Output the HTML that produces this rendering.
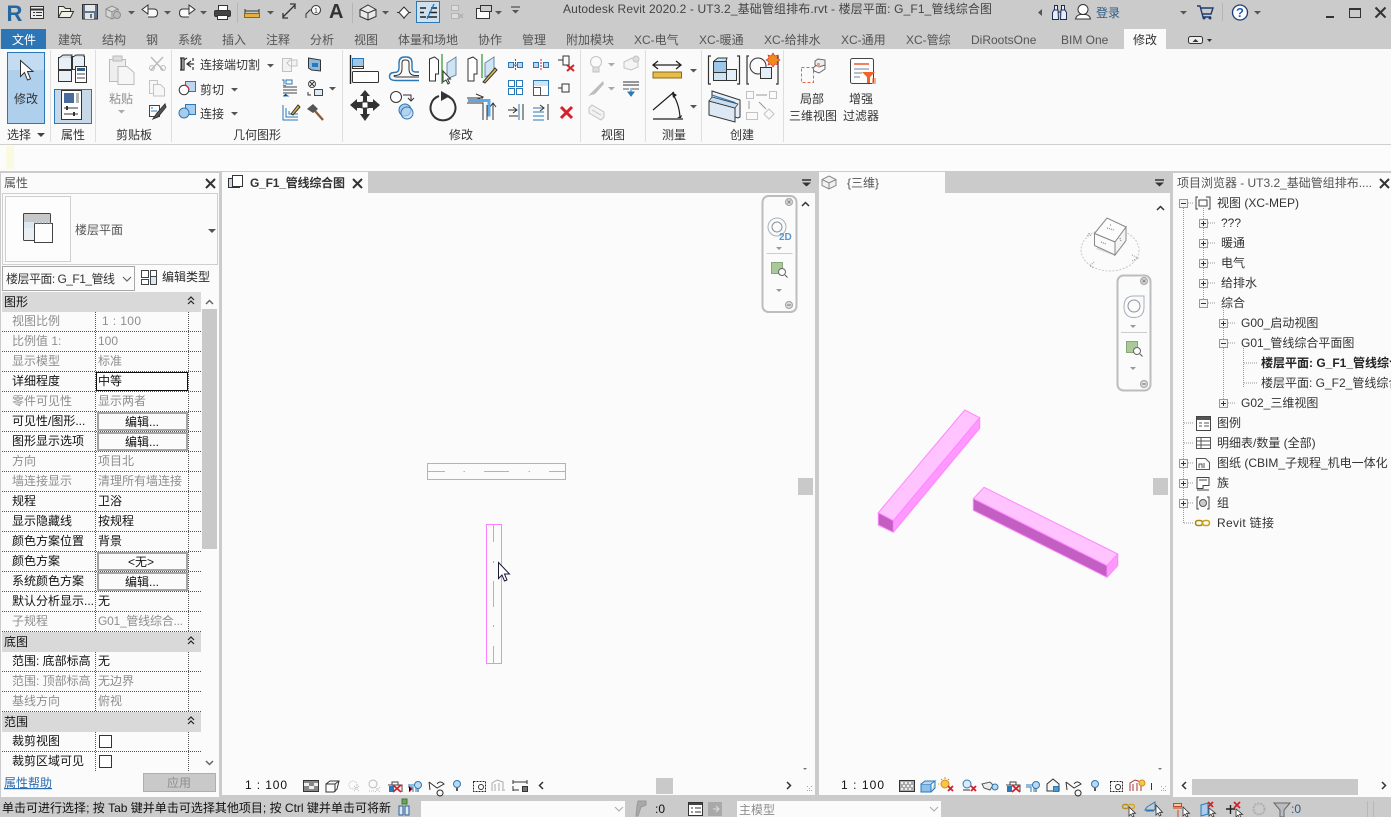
<!DOCTYPE html>
<html lang="zh"><head><meta charset="utf-8"><title>Autodesk Revit 2020.2</title>
<style>
html,body{margin:0;padding:0;background:#cbcbcb;width:1391px;height:817px;overflow:hidden}
svg{display:block;position:absolute;left:0;top:0}
text{font-family:"Liberation Sans","Noto Sans CJK SC",sans-serif;font-size:12px;fill:#333;white-space:pre}
.g{fill:#8e8e8e}.k{fill:#111}.m{fill:#555}
.d{stroke:#333;fill:none}.l{stroke:#bdbdbd;fill:none}.b{stroke:#2a78b8;fill:none}
.dot{stroke:#555;stroke-width:1;stroke-dasharray:1 1;fill:none}
.tr{stroke:#999;stroke-width:1;stroke-dasharray:1 1;fill:none}
.btn{fill:#fbfbfb;stroke:#a5a5a5;stroke-width:2}
</style></head><body>
<svg width="1391" height="817" viewBox="0 0 1391 817" xmlns="http://www.w3.org/2000/svg">
<defs>
<path id="ar" d="M0 0h7l-3.500 3.500z" fill="#555"/>
<g id="pl"><rect x=".5" y=".5" width="8" height="8" fill="#f4f4f4" stroke="#999"/><path d="M2 4.500h5M4.500 2v5" stroke="#333"/></g>
<g id="mi"><rect x=".5" y=".5" width="8" height="8" fill="#f4f4f4" stroke="#999"/><path d="M2 4.500h5" stroke="#333"/></g>
<g id="gr"><path d="M0 0h1v1H0zM2 2h1v1H2zM4 4h1v1H4zM4 0h1v1H4zM0 4h1v1H0zM2 4h1v1H2z" fill="#aaa"/></g>
</defs>

<!-- base -->
<rect width="1391" height="817" fill="#cbcbcb"/>
<!-- ribbon -->
<rect x="0" y="49" width="1391" height="95" fill="#fafafa"/>
<rect x="0" y="145" width="1391" height="26" fill="#fcfcfc"/>
<rect x="6" y="146" width="8" height="23" fill="#fafae0"/>
<rect x="0" y="144" width="1391" height="1" fill="#cfcfcf"/>
<path d="M50.500 50v92M95.500 50v92M171.500 50v92M342.500 50v92M580.500 50v92M645.500 50v92M701.500 50v92M783.500 50v92" stroke="#dedede"/>

<!-- title bar -->
<text x="6.500" y="21" style="font-size:22px;font-weight:bold;fill:#27679f">R</text>
<g class="d"><rect x="30.500" y="6.500" width="13" height="12" fill="#eee"/><path d="M31 9.500h12" stroke-width="2"/><path d="M33 12.500h2M36 12.500h6M33 15.500h2M36 15.500h6"/></g>
<path d="M58.500 17.500v-11h5l2 2h5v3M58.500 17.500l3-6h12l-3 6z" fill="#f2f0e4" stroke="#333"/>
<g><rect x="82.500" y="4.500" width="15" height="14.500" fill="#607389" stroke="#333"/><rect x="85" y="5" width="10" height="6" fill="#e6e9ec"/><rect x="85" y="13" width="9" height="6" fill="#e4e4e4"/><rect x="90" y="14" width="2" height="4" fill="#607389"/></g>
<path d="M106 9l6-3 6 3v7l-6 3-6-3z" fill="#d6d6d6" stroke="#8c8c8c"/><path d="M106 9l6 3 6-3M112 12v7" stroke="#8c8c8c" fill="none"/><circle cx="117" cy="15" r="3.500" fill="#bbb" stroke="#8c8c8c"/><use href="#ar" x="128" y="11"/>
<path d="M148 9h6q3.500 0 3.500 4t-3.500 4h-6M148 5l-6 4.500 6 4.500z" fill="#fafafa" stroke="#333"/><use href="#ar" x="164" y="11"/>
<path d="M189 9h-6q-3.500 0-3.500 4t3.500 4h6M189 5l6 4.500-6 4.500z" fill="#fafafa" stroke="#333"/><use href="#ar" x="200" y="11"/>
<rect x="218.500" y="5.500" width="9" height="5" fill="#fff" stroke="#333"/><rect x="214.500" y="10.500" width="16" height="6" rx="1.500" fill="#444" stroke="#333"/><rect x="217.500" y="15.500" width="10" height="4" fill="#fff" stroke="#333"/>
<path d="M237.500 3v20" stroke="#b5b5b5"/>
<path d="M245 9v4M259 9v4M245 11h14" stroke="#333"/><rect x="244.500" y="13.500" width="15" height="4" fill="#e3b23c" stroke="#8a6a10"/><use href="#ar" x="267" y="11"/>
<path d="M283 17l12-12M283 13v5h5M295 9v-5h-5" stroke="#333" fill="none" stroke-width="1.300"/>
<path d="M306 18v-4l4-4h4" stroke="#333" fill="none"/><circle cx="316" cy="10" r="4.500" fill="#fafafa" stroke="#333"/><text x="314" y="13" style="font-size:7px">1</text>
<text x="329" y="18" style="font-size:20px;font-weight:bold;fill:#333">A</text>
<path d="M352.500 3v20" stroke="#b5b5b5"/>
<path d="M368 5l8 4.500v7l-8 3.500-8-3.500v-7z" fill="#e9e9e9" stroke="#333"/><path d="M360 9.500l8 3.500 8-3.500M368 13v7" stroke="#333" fill="none"/><use href="#ar" x="382" y="11"/>
<path d="M397 12.500h14M404 7v12" stroke="#333"/><path d="M404 7l5 5.500-5 5.500-5-5.500z" fill="#fafafa" stroke="#333"/>
<rect x="416.500" y="1.500" width="23" height="21" fill="#cfe0ef" stroke="#2a78b8"/><path d="M420 8h6M420 12.500h4M420 17h6M431 8h6M429 12.500h8M427 17h10" stroke="#222" stroke-width="1.500"/><path d="M427 19l7-15" stroke="#2a78b8" stroke-width="1.300"/>
<g stroke="#b4b4b4" fill="#dcdcdc"><rect x="451.500" y="5.500" width="7" height="5"/><rect x="451.500" y="13.500" width="7" height="5"/></g><path d="M459 14l4 4m0-4l-4 4" stroke="#aaa"/>
<rect x="476.500" y="8.500" width="13" height="10" fill="#fafafa" stroke="#333"/><rect x="480.500" y="5.500" width="11" height="6" fill="#ccc" stroke="#333"/><use href="#ar" x="495" y="11"/>
<path d="M511 7h9" stroke="#555" stroke-width="1.300"/><use href="#ar" x="512" y="10"/>
<text x="563" y="13" textLength="429" lengthAdjust="spacing" style="fill:#444">Autodesk Revit 2020.2 - UT3.2_基础管组排布.rvt - 楼层平面: G_F1_管线综合图</text>

<path d="M1042 9v7l-4-3.500z" fill="#555"/>
<g fill="#e7edf5" stroke="#1d2c57"><rect x="1054.500" y="5.500" width="3" height="5"/><rect x="1061.500" y="5.500" width="3" height="5"/><path d="M1052.500 19.500v-7l1.500-2.500h4l.5 9.500zM1066.500 19.500v-7l-1.500-2.500h-4l-.5 9.500z"/></g><path d="M1058 12h3" stroke="#1d2c57"/>
<circle cx="1083" cy="9.500" r="5" fill="#fff" stroke="#333"/><path d="M1075.500 19q1-4 5-4.500h5q4 .5 5 4.500z" fill="#fff" stroke="#333"/>
<text x="1096" y="17" style="fill:#2d5a86">登录</text>
<use href="#ar" x="1180" y="11"/>
<path d="M1197 6h3l3 11h8M1201 8h12l-2 6h-9" fill="none" stroke="#1d3c6e" stroke-width="1.400"/><circle cx="1204" cy="18" r="1.500" fill="#1d3c6e"/><circle cx="1210" cy="18" r="1.500" fill="#1d3c6e"/>
<path d="M1222.500 3v18" stroke="#b5b5b5"/>
<circle cx="1240" cy="12.500" r="7.500" fill="#fff" stroke="#1d3c6e" stroke-width="1.300"/><text x="1236" y="17" style="font-size:13px;font-weight:bold;fill:#2a5fb0">?</text>
<use href="#ar" x="1254" y="11"/>
<rect x="1326" y="16" width="8" height="2" fill="#333"/>
<rect x="1349.500" y="8.500" width="11" height="9" fill="none" stroke="#333"/><rect x="1349" y="8" width="12" height="2" fill="#333"/>
<path d="M1375.500 7.500l10 10m0-10l-10 10" stroke="#333" stroke-width="2"/>

<!-- tabs -->
<rect x="1" y="29" width="45" height="20" fill="#2e75b6"/>
<text x="12" y="44" style="fill:#fff">文件</text>
<g class="m">
<text x="58" y="44" class="m">建筑</text><text x="102" y="44" class="m">结构</text><text x="146" y="44" class="m">钢</text><text x="178" y="44" class="m">系统</text><text x="222" y="44" class="m">插入</text><text x="266" y="44" class="m">注释</text><text x="310" y="44" class="m">分析</text><text x="354" y="44" class="m">视图</text><text x="398" y="44" class="m">体量和场地</text><text x="478" y="44" class="m">协作</text><text x="522" y="44" class="m">管理</text><text x="566" y="44" class="m">附加模块</text><text x="634" y="44" class="m">XC-电气</text><text x="699" y="44" class="m">XC-暖通</text><text x="764" y="44" class="m">XC-给排水</text><text x="841" y="44" class="m">XC-通用</text><text x="906" y="44" class="m">XC-管综</text><text x="971" y="44" class="m">DiRootsOne</text><text x="1061" y="44" class="m">BIM One</text>
</g>
<rect x="1124" y="29" width="42" height="20" fill="#fafafa"/>
<text x="1133" y="44">修改</text>
<rect x="1188.500" y="36.500" width="14" height="7" rx="2" fill="#eee" stroke="#333"/><path d="M1192.500 42l3-3 3 3z" fill="#333"/><path d="M1207 39h5l-2.500 3z" fill="#333"/>

<!-- ribbon: select -->
<rect x="7.500" y="52.500" width="37" height="71" fill="#aed0ec" stroke="#2a78b8"/><rect x="8" y="53" width="36" height="17" fill="#c3dcf1"/>
<path d="M20.500 60.500v16l4-4 3 7.500 3-1.200-3-7.300h5.500z" fill="#fff" stroke="#333"/>
<text x="14" y="103">修改</text>
<text x="7" y="139">选择</text><path d="M37 133h8l-4 4z" fill="#444"/>
<!-- properties -->
<g stroke="#333" fill="#e8eff5"><rect x="58.500" y="57.500" width="13" height="12"/><rect x="72.500" y="56.500" width="12" height="13"/><rect x="58.500" y="70.500" width="13" height="11"/></g>
<path d="M59 58l4-3h9l-1 3M73 57l3-2h8v2" fill="#d5e2ee" stroke="#333"/>
<rect x="75.500" y="66.500" width="11" height="16" fill="#fff" stroke="#333"/><rect x="77" y="68" width="8" height="3" fill="#345b8b"/><path d="M77 74h8M77 78h8" stroke="#444"/>
<rect x="54.500" y="89.500" width="37" height="34" fill="#c7d9e9" stroke="#2a78b8"/>
<rect x="61.500" y="90.500" width="20" height="29" fill="#fff" stroke="#333"/><rect x="64" y="93" width="10" height="10" fill="#486d9c"/><rect x="76" y="93" width="3" height="10" fill="#b4b4b4"/>
<path d="M64 108h14M64 114h14" stroke="#333"/><path d="M67 106v4M74 112v4" stroke="#333" stroke-width="2"/>
<text x="61" y="139">属性</text>
<!-- clipboard -->
<rect x="109.500" y="59.500" width="16" height="22" fill="#eee" stroke="#bbb"/><rect x="113" y="56" width="9" height="5" fill="#ddd" stroke="#bbb"/><path d="M118 66.500h9l7 6v12h-16z" fill="#f6f6f6" stroke="#bbb"/>
<text x="109" y="103" class="g">粘贴</text><path d="M118 110h7l-3.500 3.500z" fill="#aaa"/>
<path d="M151 57l12 13M163 57l-12 13" stroke="#bbb" stroke-width="1.500"/><circle cx="152" cy="68" r="2.500" fill="none" stroke="#bbb"/><circle cx="163" cy="68" r="2.500" fill="none" stroke="#bbb"/>
<path d="M149.500 80.500h8v13h-8z" fill="#f7f7f7" stroke="#c4c4c4"/><path d="M153.500 84.500h7l4 4v7.500h-11z" fill="#f7f7f7" stroke="#c4c4c4"/>
<rect x="149.500" y="105.500" width="10" height="11" fill="#fff" stroke="#444"/><path d="M151 108h2M151 111h6" stroke="#2a78b8"/><path d="M165 104l-8 9-4 6 5-2 8-10z" fill="#555" stroke="#333"/>
<text x="116" y="139">剪贴板</text>
<!-- geometry -->
<path d="M180 58h4v12h-4M187 58l-3 2M188 64h6M191 61l-4 3 4 3M193 58v3M193 67v3" stroke="#333" fill="none" stroke-width="1.200"/><path d="M181.500 58v12" stroke="#333" stroke-width="2"/>
<text x="200" y="69">连接端切割</text><use href="#ar" x="267" y="64"/>
<rect x="185.500" y="81.500" width="10" height="10" fill="#bcd7ef" stroke="#2a78b8"/><circle cx="184" cy="90" r="4.800" fill="#fff" stroke="#333"/><path d="M184 85.200a4.800 4.800 0 0 1 4.800 4.800" fill="none" stroke="#d2222a" stroke-width="1.200"/>
<text x="200" y="94">剪切</text><use href="#ar" x="231" y="88"/>
<rect x="185.500" y="104.500" width="10" height="10" fill="#a8cdec" stroke="#2a78b8"/><circle cx="184" cy="113" r="5" fill="#a8cdec" stroke="#2a78b8"/>
<text x="200" y="118">连接</text><use href="#ar" x="231" y="112"/>
<path d="M282.500 58.500h9v13h-9zM296 60h-6l-3 3 3 3h7v-6z" fill="#f2f2f2" stroke="#c2c2c2"/>
<path d="M308.500 58l12 2v11l-9-1-3-2z" fill="#8db9df" stroke="#333"/><rect x="312" y="63" width="6" height="4" fill="#2a78b8"/>
<path d="M283 87h14M283 90h14M283 93h14" stroke="#444"/><path d="M283 85l3 1m-3 10h5l-2.500-2" stroke="#2a78b8"/><path d="M282 80h2v4M286 80h6v4h-6z" stroke="#2a78b8" fill="none"/>
<circle cx="312" cy="84" r="3.500" fill="none" stroke="#444"/><path d="M310 82l4 4m0-4l-4 4M308 92v3h3" stroke="#333" fill="none"/><rect x="314.500" y="89.500" width="8" height="6" fill="#ddebf7" stroke="#444"/><use href="#ar" x="329" y="87"/>
<path d="M283 105v15h15M286 108v9h12M289 111v3h9" stroke="#2a78b8" fill="none"/><path d="M291 114l7-9 2 2-7 8z" fill="#e3b23c" stroke="#333"/>
<path d="M315 111l8 9" stroke="#8a5c3c" stroke-width="2.400"/><path d="M307 109l6-5 5 5-5 4z" fill="#555"/>
<text x="233" y="139">几何图形</text>
<!-- modify -->
<path d="M350.500 55v29" stroke="#222" stroke-width="1.400"/><rect x="352.500" y="58.500" width="11" height="8" fill="#9ec6e9" stroke="#2a78b8"/><rect x="352.500" y="66.500" width="11" height="2" fill="none" stroke="#333"/><rect x="352.500" y="71.500" width="26" height="11" rx="1" fill="#fff" stroke="#333"/>
<path d="M419 80.500H396q-6.500 0-6.500-4 0-4 5-4 4.500 0 4.500-4.500V63q0-6 5.500-6h2q5.500 0 5.500 6v5.500q0 3.500 3.500 3.500H419" fill="none" stroke="#2a78b8" stroke-width="1.400"/><path d="M419 77H397q-3 0-3-1 0-.5 1-.5 7 0 7-7V63q0-3 2.500-3h1.500q3 0 3 3v6q0 6.500 6.500 6.500H419" fill="none" stroke="#333"/>
<path d="M429.500 59l5-2 4 3v14h-3v7h-6z" fill="#fff" stroke="#333"/><path d="M442 54v30" stroke="#47a447" stroke-width="1.400"/><path d="M456 57l-9 6v16l9-4z" fill="#cfe4f3" stroke="#6a8aa6"/><path d="M443 71v11l3-2 2 4 1.500-1-2-4h3z" fill="#fff" stroke="#333"/>
<path d="M468 59l5-2 4 3v14h-3v7h-6z" fill="#fff" stroke="#333"/><path d="M482 54v24" stroke="#47a447" stroke-width="1.400"/><path d="M494 57l-9 6v14l9-4z" fill="#cfe4f3" stroke="#6a8aa6"/><path d="M483 82l12-14 2 2-12 13z" fill="#e9bd4a" stroke="#333"/>
<path d="M508 65h15" stroke="#2a78b8"/><rect x="508.500" y="62.500" width="5" height="5" fill="#bcd7ef" stroke="#2a78b8"/><rect x="517.500" y="62.500" width="5" height="5" fill="#bcd7ef" stroke="#2a78b8"/><path d="M515.500 59v12" stroke="#d2222a" stroke-dasharray="2 1"/>
<rect x="533.500" y="62.500" width="5" height="5" fill="#bcd7ef" stroke="#2a78b8"/><rect x="543.500" y="62.500" width="5" height="5" fill="#bcd7ef" stroke="#2a78b8"/><path d="M541 59v12" stroke="#d2222a" stroke-dasharray="2 1"/>
<path d="M558 60h5M563 56v9h6v-9z" stroke="#333" fill="none"/><path d="M567 65l7 6m0-6l-7 6" stroke="#d2222a" stroke-width="2"/>
<g stroke="#2a78b8" fill="#fff"><rect x="508.500" y="80.500" width="6" height="6"/><rect x="516.500" y="80.500" width="6" height="6"/><rect x="508.500" y="88.500" width="6" height="6"/><rect x="516.500" y="88.500" width="6" height="6"/></g>
<rect x="533.500" y="80.500" width="15" height="15" fill="#fff" stroke="#2a78b8"/><rect x="534" y="81" width="14" height="5" fill="#cfe4f3"/><rect x="533.500" y="87.500" width="7" height="8" fill="#fff" stroke="#555"/>
<path d="M558 88h4M562 84v8h7v-8z" stroke="#333" fill="none"/>
<path d="M508 110h9M513 107l4 3-4 3M509 116h9M523 104v16" stroke="#333" fill="none"/><path d="M519 104v16" stroke="#2a78b8"/>
<path d="M533 108h11M533 112h11M533 116h11M533 120h11" stroke="#2a78b8"/><path d="M540 105l4 3-4 3" stroke="#333" fill="none"/><path d="M548 104v16" stroke="#333"/>
<path d="M561 107l11 11m0-11l-11 11" stroke="#d2222a" stroke-width="3"/>
<path d="M365 90l5 6h-3v6h6v-3l7 6-7 6v-3h-6v6h3l-5 7-5-7h3v-6h-6v3l-7-6 7-6v3h6v-6h-3z" fill="#333"/><rect x="362" y="102" width="6" height="6" fill="#fff" stroke="#333"/>
<circle cx="396" cy="97" r="5.500" fill="#fff" stroke="#333"/><path d="M403 95h8v5M408 98l3 3 3-3" stroke="#333" fill="none"/><circle cx="405" cy="110" r="6" fill="#a9cdec" stroke="#2a78b8"/><circle cx="407" cy="113" r="6" fill="#bcd7ef" stroke="#2a78b8" fill-opacity=".6"/>
<path d="M439 96a12.500 12.500 0 1 0 8 0" fill="none" stroke="#333" stroke-width="2"/><path d="M441 91l9 5-9 5z" fill="#333"/>
<path d="M467 98h16M467 103h16v17M476 94l7 3-7 3M493 120v-16M490 107l3-4 3 4" stroke="#333" fill="none"/><path d="M468 100.500h21v16" stroke="#5ca8e8" stroke-width="3" fill="none"/><path d="M487 120v-15" stroke="#333"/>
<text x="449" y="139">修改</text>
<!-- view -->
<circle cx="596" cy="62" r="5.500" fill="#fafafa" stroke="#c2c2c2"/><rect x="593" y="67" width="6" height="5" fill="#ddd" stroke="#c2c2c2"/><path d="M608 63h7l-3.500 3.500z" fill="#aaa"/>
<path d="M624 62l8-4 6 2v7l-7 3-7-2z" fill="#f4f4f4" stroke="#c2c2c2"/><circle cx="636" cy="59" r="3" fill="#ddd" stroke="#c2c2c2"/>
<path d="M603 81l-9 9-6 6 7-2 9-10z" fill="#bdbdbd"/><path d="M608 87h7l-3.500 3.500z" fill="#aaa"/>
<path d="M623 82h16M623 85h16" stroke="#333"/><path d="M623 89h6M632 89h7" stroke="#555"/><path d="M631 88v4M628 92h6l-3 4z" fill="#2a78b8" stroke="#2a78b8"/>
<path d="M589 108l3-3 12 7v5l-3 3-12-7z" fill="#f2f2f2" stroke="#c2c2c2"/><path d="M592 110l9 5" stroke="#c2c2c2"/>
<text x="601" y="139">视图</text>
<!-- measure -->
<path d="M654 65h26M658 61l-5 4 5 4M676 61l5 4-5 4" stroke="#222" fill="none" stroke-width="1.300"/>
<rect x="653" y="72" width="28.500" height="6" fill="#e8bc4a" stroke="#8a6a10"/>
<path d="M653 119h30M653 110l21-18M672 93q7 10 8 24" stroke="#222" fill="none" stroke-width="1.200"/><path d="M672 92l5 3-4 3zM677 118l5-3-1 3z" fill="#222"/>
<use href="#ar" x="690" y="69"/><use href="#ar" x="690" y="105"/>
<text x="662" y="139">测量</text>
<!-- create -->
<path d="M711 56h-2.500v28h2.500M737 56h2.500v28h-2.500" stroke="#333" fill="none" stroke-width="1.200"/>
<rect x="713.500" y="61.500" width="13" height="11" fill="#9cc6ea" stroke="#333"/><path d="M714 61l4-3h9l-1 3" fill="#cfe4f3" stroke="#333"/><rect x="713.500" y="72.500" width="13" height="8" fill="#cfe4f3" stroke="#333"/><rect x="726.500" y="69.500" width="10" height="11" fill="#e2eef8" stroke="#333"/>
<path d="M749 56h-2v28h2M776 56h2v28h-2" stroke="#333" fill="none" stroke-width="1.200"/><circle cx="758" cy="66" r="8" fill="#fafafa" stroke="#333"/>
<rect x="760.500" y="67.500" width="11" height="11" fill="#e2eef8" stroke="#333"/><path d="M773 53l2 3 3-1-1 3 3 2-3 2 1 3-3-1-2 3-2-3-3 1 1-3-3-2 3-2-1-3 3 1z" fill="#f08a1c" stroke="#d2222a" stroke-width=".6"/>
<path d="M712 91l28 9v17l-2 1-26-8z" fill="#e8eff6" stroke="#333"/><path d="M712 95l23 7.500v15" fill="#9cc6ea" stroke="#2a78b8"/><path d="M709 101l26 7v14l-26-7z" fill="#dce9f4" stroke="#333"/><path d="M709 101l3-4 26 7-3 4z" fill="#c7ddef" stroke="#333" stroke-width=".7"/>
<rect x="746.500" y="91.500" width="7" height="7" fill="#fafafa" stroke="#c2c2c2"/><rect x="769.500" y="91.500" width="7" height="7" fill="#fafafa" stroke="#c2c2c2"/><rect x="746.500" y="112.500" width="11" height="7" fill="#fafafa" stroke="#c2c2c2"/><path d="M769 109l5 5-5 5-5-5z" fill="#fafafa" stroke="#c2c2c2"/><path d="M756 95h11M749 101v8M759 102l7 7" stroke="#999"/>
<text x="730" y="139">创建</text>
<!-- local 3d + filter -->
<rect x="801.500" y="67.500" width="12" height="15" fill="none" stroke="#e8633a" stroke-dasharray="3 2"/><path d="M813 68l6-5 6 1v5l-6 4-5-2z" fill="#fafafa" stroke="#666"/><path d="M818 59l7 1v5l-6 2-4-2v-4z" fill="#eee" stroke="#666"/><rect x="817" y="63" width="3" height="4" fill="#e8a07a"/>
<text x="800" y="103">局部</text><text x="789" y="120">三维视图</text>
<rect x="850.500" y="58.500" width="23" height="25" rx="2" fill="#fdfdfd" stroke="#444"/><path d="M854 64h15" stroke="#e8633a" stroke-width="1.600"/><path d="M854 69h15M854 73h8M854 77h6" stroke="#8a9bb0" stroke-width="1.300"/><path d="M862 72h13l-5 5v6h-3v-6z" fill="#f0622a"/><path d="M872 79h4M872 81h4M872 83h4" stroke="#f0622a"/>
<text x="849" y="103">增强</text><text x="843" y="120">过滤器</text>

<!-- panels gap -->
<rect x="0" y="171" width="1391" height="626" fill="#cbcbcb"/>
<!-- properties panel -->
<rect x="0" y="173" width="219" height="624" fill="#fbfbfb"/>
<rect x="0" y="173" width="1" height="624" fill="#cbcbcb"/>
<text x="4" y="187" class="m">属性</text>
<path d="M206 179l9 9m0-9l-9 9" stroke="#333" stroke-width="2"/>
<rect x="2.500" y="193.500" width="215" height="71" fill="#fbfbfb" stroke="#cfcfcf"/>
<rect x="5.500" y="196.500" width="65" height="65" fill="#fdfdfd" stroke="#cfcfcf"/>
<rect x="23.500" y="213.500" width="27" height="27" rx="1" fill="#e9eef2" stroke="#444"/><rect x="24" y="214" width="26" height="8" fill="#c8c8c8"/><rect x="24" y="222" width="26" height="6" fill="#dbe8f1"/>
<rect x="34.500" y="223.500" width="18" height="19" fill="#fdfdfd" stroke="#444"/><path d="M34 223h18" stroke="#999" stroke-dasharray="2 1"/>
<text x="75" y="234" class="m">楼层平面</text>
<path d="M208 229h8l-4 4z" fill="#555"/>
<rect x="2.500" y="266.500" width="132" height="24" fill="#fbfbfb" stroke="#a8a8a8"/>
<text x="6" y="283" textLength="109" lengthAdjust="spacing">楼层平面: G_F1_管线</text>
<path d="M123 277l4 4 4-4" stroke="#666" fill="none" stroke-width="1.200"/>
<rect x="141.500" y="270.500" width="7" height="7" fill="#fff" stroke="#444"/><rect x="150.500" y="270.500" width="6" height="7" fill="#fff" stroke="#444"/><rect x="141.500" y="279.500" width="7" height="5" fill="#fff" stroke="#444"/><rect x="150.500" y="276.500" width="6" height="8" fill="#dbe8f1" stroke="#444"/>
<text x="162" y="281" style="fill:#2b2b2b">编辑类型</text>

<!-- props table -->
<rect x="2" y="292" width="199" height="20" fill="#d9d9d9"/>
<rect x="2" y="632" width="199" height="20" fill="#d9d9d9"/>
<rect x="2" y="712" width="199" height="20" fill="#d9d9d9"/>
<path class="dot" d="M95.500 312v320M95.500 652v60M95.500 732v40M188.500 312v320M188.500 652v60M188.500 732v40M2 331.500h199M2 351.500h199M2 371.500h199M2 391.500h199M2 411.500h199M2 431.500h199M2 451.500h199M2 471.500h199M2 491.500h199M2 511.500h199M2 531.500h199M2 551.500h199M2 571.500h199M2 591.500h199M2 611.500h199M2 631.500h199M2 671.500h199M2 691.500h199M2 711.500h199M2 751.500h199"/>
<text x="4" y="306" class="k">图形</text><text x="4" y="646" class="k">底图</text><text x="4" y="726" class="k">范围</text>
<path d="M188 300l3-3 3 3M188 304l3-3 3 3M188 640l3-3 3 3M188 644l3-3 3 3M188 720l3-3 3 3M188 724l3-3 3 3" stroke="#222" fill="none" stroke-width="1.200"/>
<g class="g">
<text x="12" y="325" class="g">视图比例</text><text x="102" y="325" class="g" textLength="39">1 : 100</text>
<text x="12" y="345" class="g">比例值 1:</text><text x="98" y="345" class="g">100</text>
<text x="12" y="365" class="g">显示模型</text><text x="98" y="365" class="g">标准</text>
<text x="12" y="405" class="g">零件可见性</text><text x="98" y="405" class="g">显示两者</text>
<text x="12" y="465" class="g">方向</text><text x="98" y="465" class="g">项目北</text>
<text x="12" y="485" class="g">墙连接显示</text><text x="98" y="485" class="g">清理所有墙连接</text>
<text x="12" y="625" class="g">子规程</text><text x="98" y="625" class="g" textLength="85">G01_管线综合...</text>
<text x="12" y="685" class="g">范围: 顶部标高</text><text x="98" y="685" class="g">无边界</text>
<text x="12" y="705" class="g">基线方向</text><text x="98" y="705" class="g">俯视</text>
</g>
<text x="12" y="385" class="k">详细程度</text><rect x="96.500" y="372.500" width="91" height="18" fill="#fdfdfd" stroke="#111"/><text x="98" y="385" class="k">中等</text>
<text x="12" y="425" class="k">可见性/图形...</text><rect x="98" y="413" width="89" height="17" class="btn"/><text x="125" y="426" class="k">编辑...</text>
<text x="12" y="445" class="k">图形显示选项</text><rect x="98" y="433" width="89" height="17" class="btn"/><text x="125" y="446" class="k">编辑...</text>
<text x="12" y="505" class="k">规程</text><text x="98" y="505" class="k">卫浴</text>
<text x="12" y="525" class="k">显示隐藏线</text><text x="98" y="525" class="k">按规程</text>
<text x="12" y="545" class="k">颜色方案位置</text><text x="98" y="545" class="k">背景</text>
<text x="12" y="565" class="k">颜色方案</text><rect x="98" y="553" width="89" height="17" class="btn"/><text x="128" y="566" class="k">&lt;无&gt;</text>
<text x="12" y="585" class="k">系统颜色方案</text><rect x="98" y="573" width="89" height="17" class="btn"/><text x="125" y="586" class="k">编辑...</text>
<text x="12" y="605" class="k">默认分析显示...</text><text x="98" y="605" class="k">无</text>
<text x="12" y="665" class="k">范围: 底部标高</text><text x="98" y="665" class="k">无</text>
<text x="12" y="745" class="k">裁剪视图</text><rect x="99.500" y="735.500" width="12" height="12" fill="#fff" stroke="#333"/>
<text x="12" y="765" class="k">裁剪区域可见</text><rect x="99.500" y="755.500" width="12" height="12" fill="#fff" stroke="#333"/>
<!-- props scrollbar -->
<rect x="202" y="309" width="15" height="240" fill="#c9c9c9"/>
<path d="M206 304l3.500-3.500 3.500 3.500" stroke="#666" fill="none" stroke-width="1.500"/>
<path d="M206 761l3.500 3.500 3.500-3.500" stroke="#666" fill="none" stroke-width="1.500"/>
<text x="4" y="787" style="fill:#2a6db3;text-decoration:underline">属性帮助</text>
<rect x="143.500" y="773.500" width="72" height="18" fill="#c9c9c9" stroke="#aeaeae"/>
<text x="167" y="787" class="g">应用</text>

<!-- view 1 -->
<rect x="222" y="193" width="593" height="602" fill="#fbfbfb"/>
<rect x="222" y="172" width="146" height="21" fill="#fbfbfb"/>
<rect x="228.500" y="178.500" width="11" height="9" fill="#fff" stroke="#333"/><rect x="232.500" y="175.500" width="10" height="11" fill="#fff" stroke="#333"/><rect x="229" y="179" width="3" height="8" fill="#cdd8e2"/>
<text x="250" y="187" style="font-weight:bold;font-size:12px" textLength="95">G_F1_管线综合图</text>
<path d="M353 179l9 9m0-9l-9 9" stroke="#333" stroke-width="2"/>
<path d="M802 180h9" stroke="#333" stroke-width="1.500"/><path d="M802 182.500h9l-4.500 4z" fill="#333"/>
<!-- view 1 plan -->
<g fill="none" stroke="#ff80ff">
<rect x="427.500" y="463.500" width="138" height="16"/>
<path d="M427 471.500h18M463.500 471.500h1.500M484 471.500h25M528.500 471.500h1.500M549 471.500h17"/>
<rect x="486.500" y="524.500" width="15" height="139"/>
<path d="M493.500 524v18M493.500 561v2M493.500 581v26M493.500 625v2M493.500 646v18"/>
</g>
<path d="M498.500 562.500v16l3.500-3.500 2.500 6 2.500-1-2.500-6h5z" fill="#fff" stroke="#1a1a3a"/>
<!-- nav bar 1 -->
<rect x="762.500" y="196" width="34" height="116" rx="6" fill="#fbfbfb" stroke="#bdbdbd" stroke-width="2"/>
<circle cx="789" cy="202" r="3.500" fill="#ddd" stroke="#aaa" stroke-width="1.200"/><path d="M787.500 200.500l3 3m0-3l-3 3" stroke="#888"/>
<circle cx="777" cy="227" r="9" fill="none" stroke="#aab0b8"/><circle cx="777" cy="227" r="5" fill="none" stroke="#8a929c"/>
<text x="779" y="240" style="font-size:10px;font-weight:bold;fill:#5b97c9">2D</text>
<path d="M776 247h6l-3 3z" fill="#999"/>
<path d="M766.500 253.500h26" stroke="#ccc"/>
<rect x="771.500" y="262.500" width="11" height="11" fill="#a9c998" stroke="#8aa67c"/><circle cx="782" cy="272" r="3.500" fill="#fbfbfb" stroke="#666"/><path d="M785 275l2.500 2.500" stroke="#555"/>
<path d="M776 289h6l-3 3z" fill="#999"/>
<circle cx="789" cy="305" r="3.500" fill="#ddd" stroke="#aaa" stroke-width="1.200"/><path d="M787 305h4" stroke="#777"/>
<path d="M802 206l3.500-3.500 3.500 3.500" stroke="#333" fill="none" stroke-width="1.500"/>
<rect x="798" y="478" width="15" height="17" fill="#c9c9c9"/>
<path d="M803 768h4l-2 2z" fill="#777"/>
<!-- view1 bottom bar -->
<text x="245" y="789" textLength="42" class="k">1 : 100</text>
<rect x="303.500" y="780.500" width="15" height="11" fill="#888" stroke="#333"/><path d="M304 783h5v3h-5zM309 786h5v3h-5zM314 783h4v3h-4z" fill="#eee"/>
<path d="M326 784l4-3h9l-2 8-3 3h-8z" fill="#fff" stroke="#333"/><path d="M326 784h9v8M335 784l4-3" stroke="#333" fill="none"/>
<g fill="#bbb"><circle cx="353" cy="785" r="4" fill="none" stroke="#bbb" stroke-dasharray="1 1"/><path d="M354 786l5 5m0-5l-5 5" stroke="#bbb" stroke-dasharray="1 1"/></g>
<circle cx="373" cy="784" r="4" fill="none" stroke="#bbb"/><path d="M375 787l5 5m0-5l-5 5M369 791h6" stroke="#bbb" stroke-dasharray="1 1"/>
<path d="M388 785h14v7M392 785v-3h6v3" stroke="#444" fill="none"/><rect x="389" y="786" width="5" height="6" fill="#2a78b8"/><path d="M393 785l8 7m0-7l-8 7" stroke="#d2222a" stroke-width="1.800"/>
<path d="M408 785h8v7M408 787h5v5" stroke="#2a78b8" fill="none"/><circle cx="418" cy="785" r="3.500" fill="#bcd7ef" stroke="#2a78b8"/><path d="M418 789v3" stroke="#333"/><path d="M409 786l3 3-3 3" stroke="#d2222a"/>
<path d="M429 782l8 6 7-4q-4-4-7 0M429 782l1 8M440 790a3 3 0 1 0 .1 0" fill="none" stroke="#333"/>
<circle cx="457" cy="784" r="3.500" fill="#bcd7ef" stroke="#2a78b8"/><path d="M456 788h2v3h-2z" fill="#555"/>
<rect x="473.500" y="781.500" width="12" height="10" fill="none" stroke="#222" stroke-dasharray="2 1"/><circle cx="481" cy="787" r="2.500" fill="#fff" stroke="#333"/>
<path d="M492 791v-8l5-3 6 2v9M495 791v-7M499 791v-8" stroke="#aaa" fill="none"/><path d="M502 790h4" stroke="#aaa" stroke-dasharray="1 1"/>
<path d="M513 780v4M527 780v4M513 782h14M513 790h6M513 786v5" stroke="#333" fill="none"/><rect x="522.500" y="786.500" width="5" height="5" fill="#777" stroke="#333"/>
<path d="M543 782l-3.500 3.500 3.500 3.500" stroke="#333" fill="none" stroke-width="1.500"/>
<rect x="656" y="778" width="17" height="16" fill="#c9c9c9"/>
<path d="M787 782l3.500 3.500-3.500 3.500" stroke="#333" fill="none" stroke-width="1.500"/>
<use href="#gr" x="807" y="786"/>

<!-- view 2 -->
<rect x="819" y="193" width="351" height="602" fill="#fbfbfb"/>
<rect x="819" y="172" width="126" height="21" fill="#fbfbfb"/>
<path d="M829 176l7 3.500v6l-7 3.500-7-3.500v-6z" fill="#f1f1f1" stroke="#888"/><path d="M822 179.500l7 3.500 7-3.500M829 183v6" stroke="#888" fill="none"/>
<text x="847" y="187" class="m">{三维}</text>
<path d="M1155 180h9" stroke="#333" stroke-width="1.500"/><path d="M1155 182.500h9l-4.500 4z" fill="#333"/>
<path d="M1157 210l3.500-3.500 3.500 3.500" stroke="#333" fill="none" stroke-width="1.500"/>
<!-- 3D bars -->
<g stroke="#ff85ff" stroke-width="1" stroke-linejoin="round">
<path d="M878.300 512.700L964.700 410 979.700 417.700 893.300 520.700z" fill="#ffc4ff"/>
<path d="M893.300 520.700L979.700 417.700V428.300L893.300 532.300z" fill="#ff99ff"/>
<path d="M878.300 512.700L893.300 520.700V532.300L878.300 525z" fill="#c35fc3"/>
<path d="M973.300 498.700L984 487.300 1117.700 554 1107 565.700z" fill="#ffc4ff"/>
<path d="M973.300 498.700L1107 565.700V577.300L973.300 510.300z" fill="#c35fc3"/>
<path d="M1107 565.700L1117.700 554V565.700L1107 577.300z" fill="#ff99ff"/>
</g>
<!-- view cube -->
<ellipse cx="1110" cy="250" rx="29" ry="21" fill="none" stroke="#c9c9c9" stroke-dasharray="2 1.500"/>
<path d="M1096 249l19 7 11-14-2-3-20 0z" fill="#dcdcdc"/>
<path d="M1094.500 233.500l12.500-15.500 19 9-11 15z" fill="#fdfdfd" stroke="#8a8a8a"/>
<path d="M1094.500 233.500v12l20.500 9.500v-13z" fill="#fbfbfb" stroke="#8a8a8a"/>
<path d="M1115 255l11-14.500V227l-11 15z" fill="#f4f4f4" stroke="#8a8a8a"/>
<path d="M1107 228l7 2M1110 225h2M1101 242l5 2M1120 238l1 3" stroke="#777" stroke-dasharray="1 1"/>
<path d="M1087 236l2-3 2 3M1094 262l-4 4 4 2M1132 255l6 3-6 3" stroke="#999" fill="none" stroke-dasharray="1 1"/>
<!-- nav bar 2 -->
<rect x="1117.500" y="275.500" width="33" height="115" rx="6" fill="#fbfbfb" stroke="#bdbdbd" stroke-width="2"/>
<circle cx="1144" cy="281" r="3.500" fill="#ddd" stroke="#aaa" stroke-width="1.200"/><path d="M1142.500 279.500l3 3m0-3l-3 3" stroke="#888"/>
<path d="M1124 306.500q0-10.500 10-10.500h10v11q0 10.500-10 10.500-10 0-10-11z" fill="none" stroke="#aab0b8"/><circle cx="1134" cy="306" r="6" fill="none" stroke="#8a929c"/>
<path d="M1130 325h6l-3 3z" fill="#999"/>
<path d="M1121 332.500h26" stroke="#ccc"/>
<rect x="1126.500" y="341.500" width="11" height="11" fill="#a9c998" stroke="#8aa67c"/><circle cx="1137" cy="351" r="3.500" fill="#fbfbfb" stroke="#666"/><path d="M1140 354l2.500 2.500" stroke="#555"/>
<path d="M1130 367h6l-3 3z" fill="#999"/>
<circle cx="1144" cy="384" r="3.500" fill="#ddd" stroke="#aaa" stroke-width="1.200"/><path d="M1142 384h4" stroke="#777"/>
<rect x="1153" y="478" width="15" height="17" fill="#c9c9c9"/>
<path d="M1158 768h4l-2 2z" fill="#777"/>
<!-- view2 bottom bar -->
<text x="841" y="789" textLength="43" class="k">1 : 100</text>
<rect x="899.500" y="780.500" width="15" height="11" fill="#999" stroke="#333"/><path d="M900 781h14v10h-14z" fill="#aaa"/><path d="M901 782h2v2h-2zM905 782h2v2h-2zM909 782h2v2h-2zM903 785h2v2h-2zM907 785h2v2h-2zM911 785h2v2h-2zM901 788h2v2h-2zM905 788h2v2h-2zM909 788h2v2h-2z" fill="#eee"/>
<path d="M921 784h10v8h-10z" fill="#8ec0e8" stroke="#2a78b8"/><path d="M921 784l4-3h10l-4 3M935 781v7l-4 4" fill="#bcd7ef" stroke="#2a78b8"/>
<circle cx="945" cy="784" r="4" fill="#f5c842" stroke="#d98a1c"/><path d="M945 777v2M939 784h-1M941 779l1 1M949 779l-1 1" stroke="#d98a1c"/><path d="M948 786l5 5m0-5l-5 5" stroke="#d2222a" stroke-width="1.800"/>
<circle cx="967" cy="784" r="4" fill="#dcebf7" stroke="#2a78b8"/><path d="M963 790h7" stroke="#333"/><path d="M971 786l5 5m0-5l-5 5" stroke="#d2222a" stroke-width="1.800"/>
<path d="M982 784l8-2 3 3-3 5-6-2z" fill="#eee" stroke="#555"/><circle cx="995" cy="787" r="3" fill="#bcd7ef" stroke="#2a78b8"/>
<path d="M1006 785h14v7M1010 785v-3h6v3" stroke="#444" fill="none"/><rect x="1007" y="786" width="5" height="6" fill="#2a78b8"/><path d="M1012 785l8 7m0-7l-8 7" stroke="#d2222a" stroke-width="1.800"/>
<path d="M1026 785h8v7M1026 787h5v5" stroke="#2a78b8" fill="none"/><circle cx="1036" cy="785" r="3.500" fill="#bcd7ef" stroke="#2a78b8"/><path d="M1036 789v3" stroke="#333"/>
<path d="M1047 791v-7l6-5 6 5v7z" fill="#f5f5f5" stroke="#333"/><rect x="1053.500" y="786.500" width="5" height="5" fill="#4f9bc9" stroke="#2a78b8"/>
<path d="M1066 782l8 6 7-4q-4-4-7 0M1066 782l1 8M1078 790a3 3 0 1 0 .1 0" fill="none" stroke="#333"/>
<circle cx="1095" cy="784" r="3.500" fill="#bcd7ef" stroke="#2a78b8"/><path d="M1094 788h2v3h-2z" fill="#555"/>
<rect x="1110.500" y="781.500" width="12" height="10" fill="none" stroke="#222" stroke-dasharray="2 1"/><circle cx="1118" cy="787" r="2.500" fill="#fff" stroke="#333"/>
<path d="M1130 791v-8l5-3 6 2v9M1133 791v-7M1137 791v-8" stroke="#a33" fill="none"/><circle cx="1142" cy="783" r="3" fill="#f5c842" stroke="#d98a1c"/>
<path d="M1151.500 783v7" stroke="#333"/>
<use href="#gr" x="1161" y="786"/>

<!-- browser -->
<rect x="1173" y="173" width="218" height="624" fill="#fbfbfb"/>
<text x="1177" y="187" textLength="195" class="m">项目浏览器 - UT3.2_基础管组排布....</text>
<path d="M1380 179l9 9m0-9l-9 9" stroke="#333" stroke-width="2"/>
<path class="tr" d="M1183.500 208v315M1203.500 208v100M1223.500 308v95M1243.500 348v40M1188 203h6M1208 223h8M1208 243h8M1208 263h8M1208 283h8M1208 303h8M1228 323h8M1228 343h8M1244 363h14M1244 383h14M1228 403h8M1184 423h9M1184 443h9M1188 463h5M1188 483h5M1188 503h5M1184 523h10"/>
<use href="#mi" x="1179" y="199"/>
<use href="#pl" x="1199" y="219"/><use href="#pl" x="1199" y="239"/><use href="#pl" x="1199" y="259"/><use href="#pl" x="1199" y="279"/><use href="#mi" x="1199" y="299"/>
<use href="#pl" x="1219" y="319"/><use href="#mi" x="1219" y="339"/><use href="#pl" x="1219" y="399"/>
<use href="#pl" x="1179" y="459"/><use href="#pl" x="1179" y="479"/><use href="#pl" x="1179" y="499"/>
<path d="M1198 197h-2v12h2M1206 197h4v12h-2" stroke="#444" fill="none"/><path d="M1199 200h8v6h-8z" fill="#fff" stroke="#444"/>
<text x="1217" y="207">视图 (XC-MEP)</text>
<text x="1221" y="227">???</text><text x="1221" y="247">暖通</text><text x="1221" y="267">电气</text><text x="1221" y="287">给排水</text><text x="1221" y="307">综合</text>
<text x="1241" y="327">G00_启动视图</text><text x="1241" y="347">G01_管线综合平面图</text>
<text x="1261" y="367" style="font-weight:bold;fill:#222">楼层平面: G_F1_管线综合</text>
<text x="1261" y="387">楼层平面: G_F2_管线综合</text>
<text x="1241" y="407">G02_三维视图</text>
<rect x="1196.500" y="416.500" width="14" height="14" fill="#fff" stroke="#444"/><rect x="1197" y="417" width="13" height="3" fill="#555"/><path d="M1199 423h3M1204 423h5M1199 426h3M1204 426h5" stroke="#555"/>
<text x="1217" y="427">图例</text>
<rect x="1196.500" y="437.500" width="14" height="11" fill="#fff" stroke="#555"/><path d="M1197 441h13M1197 445h13M1201 438v10" stroke="#555"/>
<text x="1217" y="447">明细表/数量 (全部)</text>
<path d="M1196.500 458.500h9l4 4v7h-13z" fill="#fff" stroke="#555"/><path d="M1199 468v-4h3v4M1204 468v-5" stroke="#555" fill="none"/>
<text x="1217" y="467">图纸 (CBIM_子规程_机电一体化</text>
<path d="M1197 477.500h12v8h-6v3h-6z" fill="#fff" stroke="#444"/><path d="M1199 480h8M1197 490h12" stroke="#444"/>
<text x="1217" y="487">族</text>
<path d="M1199 497h-2v12h2M1207 497h2v12h-2" stroke="#444" fill="none"/><circle cx="1203" cy="503" r="3.500" fill="#ccc" stroke="#555"/>
<text x="1217" y="507">组</text>
<rect x="1195.500" y="520.500" width="7" height="5" rx="2.500" fill="none" stroke="#a88610" stroke-width="1.600"/><rect x="1202.500" y="520.500" width="7" height="5" rx="2.500" fill="none" stroke="#c9a01c" stroke-width="1.600"/>
<text x="1217" y="527" textLength="57">Revit 链接</text>
<!-- browser scrollbar -->
<path d="M1186 782l-3.500 3.500 3.500 3.500" stroke="#333" fill="none" stroke-width="1.500"/>
<rect x="1192" y="779" width="166" height="16" fill="#c9c9c9"/>
<path d="M1382 782l3.500 3.500-3.500 3.500" stroke="#333" fill="none" stroke-width="1.500"/>

<!-- status bar -->
<text x="2" y="812" textLength="389" class="k" lengthAdjust="spacing">单击可进行选择; 按 Tab 键并单击可选择其他项目; 按 Ctrl 键并单击可将新</text>
<path d="M399 806h4v9h-4zM405 806h4v9h-4z" fill="#dbe8f1" stroke="#2a5f96"/><rect x="402" y="799" width="5" height="5" fill="#6aa35a" stroke="#3e7a30"/>
<rect x="421" y="801" width="204" height="16" fill="#fbfbfb"/><path d="M615 807l4 4 4-4" stroke="#aaa" fill="none"/>
<path d="M638 801h8v4l-5 2-3 9h-2l1-10z" fill="#a8a8a8" stroke="#999"/><text x="655" y="813" class="k">:0</text>
<rect x="688.500" y="802.500" width="14" height="13" fill="#fff" stroke="#333"/><rect x="689" y="803" width="13" height="2" fill="#444"/><path d="M691 808h2M695 808h6M691 812h2M695 812h6" stroke="#333"/>
<rect x="708" y="802" width="14" height="14" fill="#a9a9a9"/><path d="M713 809h6M716 806l3 3-3 3" stroke="#ddd" fill="none"/>
<rect x="737" y="801" width="204" height="16" fill="#fbfbfb"/><text x="739" y="814" class="g">主模型</text><path d="M930 807l4 4 4-4" stroke="#aaa" fill="none"/>
<g>
<rect x="1122.500" y="804.500" width="6" height="4" rx="2" fill="none" stroke="#b8901c" stroke-width="1.400"/><rect x="1128.500" y="804.500" width="6" height="4" rx="2" fill="none" stroke="#d9a520" stroke-width="1.400"/>
<path d="M1129 807v9l2-2 1.500 3 1.500-.7-1.500-3h3z" fill="#fff" stroke="#333" stroke-width=".8"/>
<path d="M1147 807l8-5v8h-10zM1146 811h8" stroke="#2a78b8" fill="none"/><path d="M1156 805v10l2-2 1.500 3 1.500-.7-1.500-3h3z" fill="#fff" stroke="#333" stroke-width=".8"/>
<rect x="1173.500" y="803.500" width="8" height="3" fill="#f5c9a0" stroke="#c9491c"/><path d="M1173 808h9M1178 810v7" stroke="#c9491c"/><path d="M1183 807v9l2-2 1.500 3 1.500-.7-1.500-3h3z" fill="#fff" stroke="#333" stroke-width=".8"/>
<path d="M1201 805l7-2v11l-7 2z" fill="#a9cdec" stroke="#2a78b8"/><path d="M1208 802l5 5m0-5l-5 5" stroke="#d2222a" stroke-width="1.800"/><path d="M1209 808v8l2-2 1.500 3 1.500-.7-1.500-3h3z" fill="#fff" stroke="#333" stroke-width=".8"/>
<path d="M1226 809h9M1230.500 805v9" stroke="#222" stroke-width="1.400"/><path d="M1234 802l6 6m0-6l-6 6" stroke="#d2222a" stroke-width="1.800"/><path d="M1236 809v8l2-2 1.500 3 1.500-.7-1.500-3h3z" fill="#fff" stroke="#333" stroke-width=".8"/>
<circle cx="1259" cy="809" r="5.500" fill="none" stroke="#aeaeae" stroke-width="2" stroke-dasharray="2 1"/>
<path d="M1274 803h16l-6 7v7h-4v-7z" fill="#b9bcc0" stroke="#666"/>
<text x="1291" y="813" style="fill:#2d5a86">:0</text>
</g>
<path d="M1367.500 801v16M1373.500 801v16" stroke="#b8b8b8"/>
</svg>
</body></html>
